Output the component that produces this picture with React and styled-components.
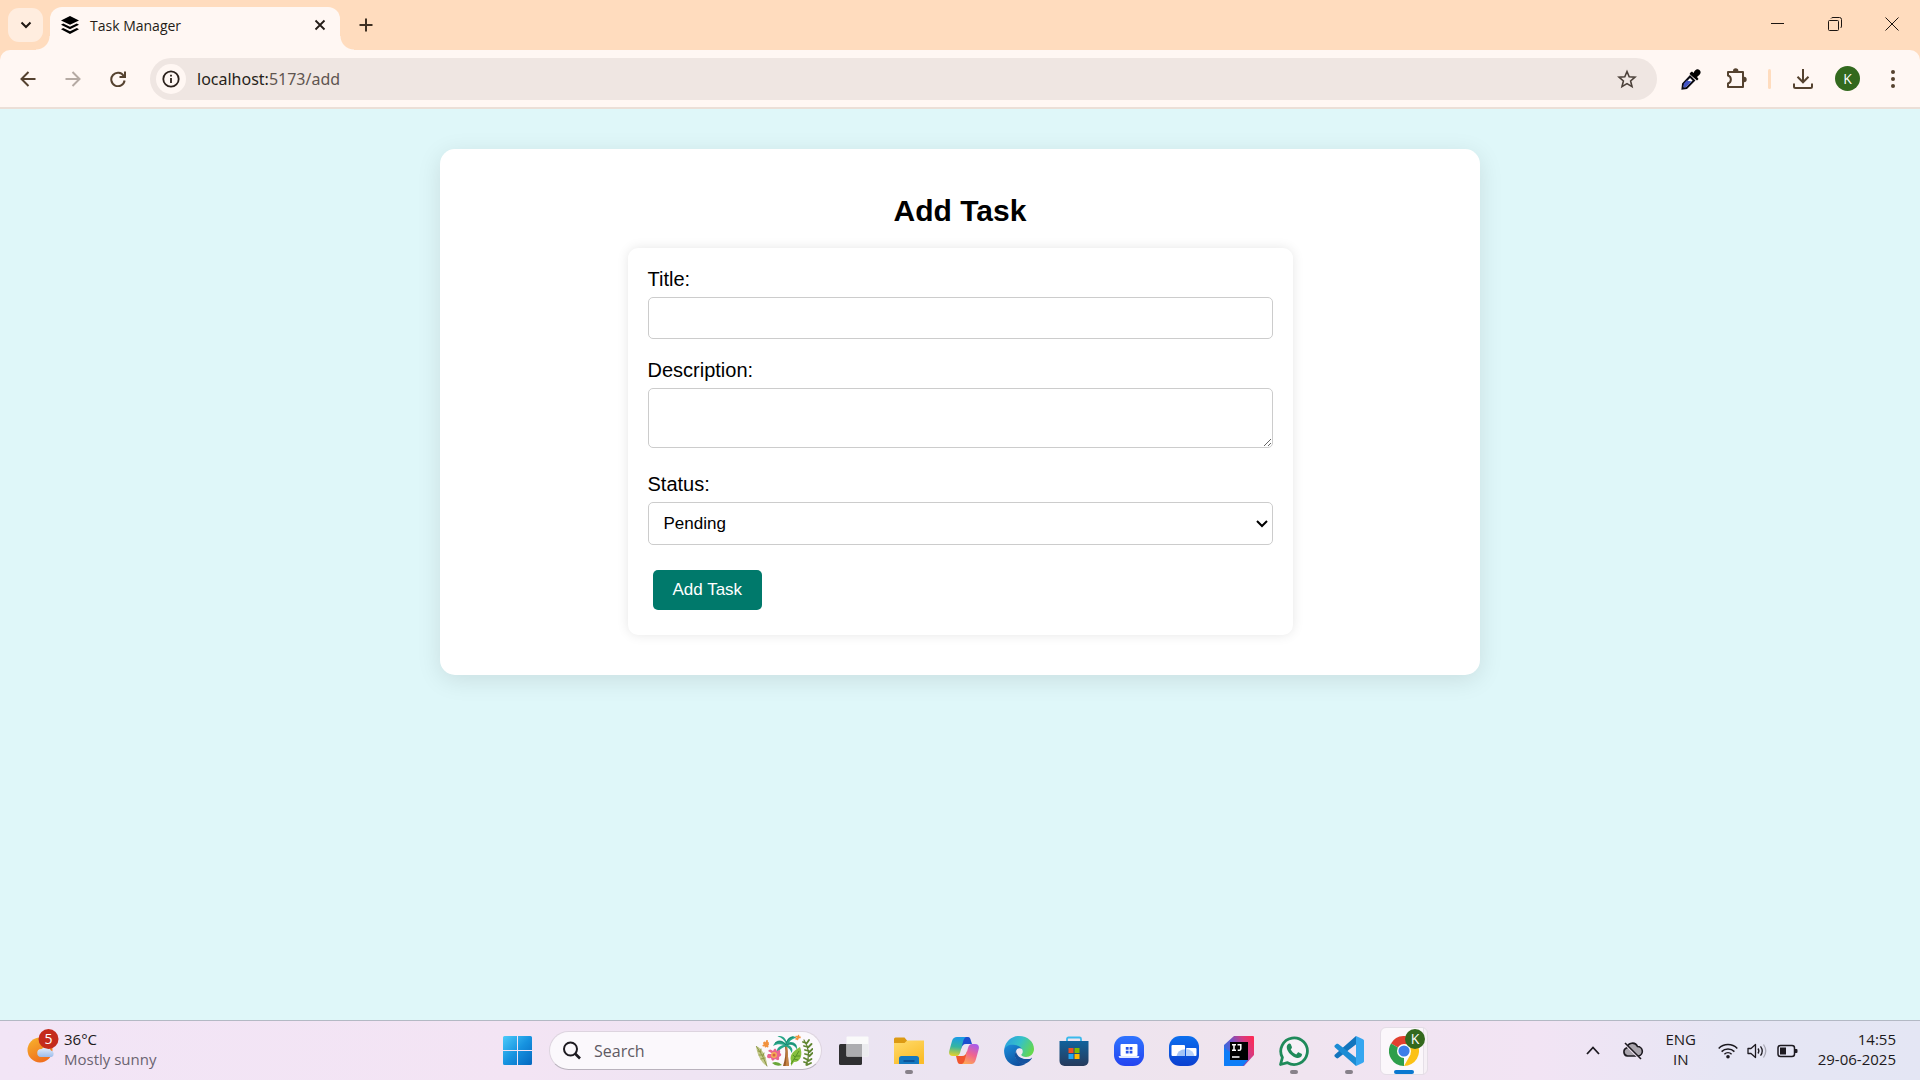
import React from "react";
import styled, { createGlobalStyle } from "styled-components";

const GlobalStyle = createGlobalStyle`
  *, *::before, *::after { box-sizing: border-box; }
  body { margin: 0; font-family: "Open Sans", "Noto Sans", sans-serif; }
  button { font: inherit; color: inherit; border: 0; background: none; padding: 0; cursor: pointer; }
  svg { display: block; }
`;

const Screen = styled.div`
  display: flex;
  flex-direction: column;
  min-height: 100vh;
  background: #ffdcbe;
`;

/* ---------- Browser tab strip ---------- */

const TabStrip = styled.header`
  display: flex;
  align-items: flex-end;
  height: 50px;
  padding-left: 8px;
  color: #3f3023;
`;

const TabSearchButton = styled.button`
  display: grid;
  place-items: center;
  width: 35px;
  height: 34px;
  margin: 0 7px 8px 0;
  border-radius: 11px;
  background: #ffeddf;
  color: #1f1712;
`;

const Tab = styled.div`
  position: relative;
  display: flex;
  align-items: center;
  gap: 11px;
  width: 290px;
  height: 43px;
  padding: 0 9px 7px 11px;
  border-radius: 12px 12px 0 0;
  background: #fff7f3;
  color: #241c17;
  font-size: 14px;
  line-height: 20px;

  &::before,
  &::after {
    content: "";
    position: absolute;
    bottom: 0;
    width: 14px;
    height: 14px;
  }
  &::before {
    right: 100%;
    background: radial-gradient(circle at 0 0, transparent 13px, #fff7f3 14px);
  }
  &::after {
    left: 100%;
    background: radial-gradient(circle at 100% 0, transparent 13px, #fff7f3 14px);
  }
`;

const TabTitle = styled.span`
  flex: 1;
  padding-top: 2px;
`;

const SmallButton = styled.button`
  display: grid;
  place-items: center;
  width: 22px;
  height: 22px;
`;

const NewTabButton = styled.button`
  display: grid;
  place-items: center;
  width: 34px;
  height: 34px;
  margin: 0 0 8px 9px;
`;

const WindowControls = styled.div`
  display: flex;
  align-self: flex-start;
  margin-left: auto;
`;

const WindowButton = styled.button`
  display: grid;
  place-items: center;
  width: 57px;
  height: 48px;
  color: #1c1511;
`;

/* ---------- Browser toolbar ---------- */

const Toolbar = styled.nav`
  display: flex;
  align-items: center;
  height: 59px;
  padding: 0 5px;
  border-radius: 10px 10px 0 0;
  border-bottom: 2px solid #ebdfd7;
  background: #fff7f3;
  color: #55422f;
`;

const ToolButton = styled.button`
  display: grid;
  place-items: center;
  width: 45px;
  height: 42px;
  color: ${(p) => (p.$muted ? "#b5aaa3" : "inherit")};
`;

const Omnibox = styled.div`
  display: flex;
  align-items: center;
  flex: 1;
  height: 42px;
  margin: 0 11px 0 10px;
  padding: 0 8px 0 6px;
  border-radius: 21px;
  background: #efe6e2;
`;

const SiteInfo = styled.button`
  display: grid;
  place-items: center;
  width: 30px;
  height: 30px;
  border-radius: 50%;
  background: #fff7f3;
  color: #2b211b;
`;

const Address = styled.div`
  flex: 1;
  padding-left: 11px;
  color: #5f5550;
  font-family: "Noto Sans", "Open Sans", sans-serif;
  font-size: 16px;
  line-height: 24px;
`;

const Host = styled.span`
  color: #261e19;
`;

const StarButton = styled.button`
  display: grid;
  place-items: center;
  width: 44px;
  height: 42px;
  color: #4b4039;
`;

const ToolDivider = styled.span`
  width: 3px;
  height: 20px;
  margin: 0 9px 0 10px;
  border-radius: 2px;
  background: #ffdcbe;
`;

const ProfileAvatar = styled.span`
  display: grid;
  place-items: center;
  width: ${(p) => p.$size}px;
  height: ${(p) => p.$size}px;
  border-radius: 50%;
  background: #33691e;
  color: #fff;
  font-size: 14px;
  line-height: 16px;
`;

/* ---------- Task form page ---------- */

const Page = styled.main`
  flex: 1;
  padding: 40px 20px;
  background: #dff7f9;
  color: #000;
  font-family: "Liberation Sans", Arial, sans-serif;
`;

const Card = styled.section`
  max-width: 1040px;
  margin: 0 auto;
  padding: 45px 40px 40px;
  border-radius: 15px;
  background: #fff;
  box-shadow: 0 5px 25px rgba(0, 0, 0, 0.1);
`;

const Heading = styled.h2`
  margin: 0 0 20px;
  font-size: 30px;
  line-height: 34px;
  text-align: center;
`;

const Form = styled.form`
  display: flex;
  flex-direction: column;
  max-width: 665px;
  margin: 0 auto;
  padding: 20px;
  border-radius: 10px;
  background: #fff;
  box-shadow: 0 0 12px rgba(0, 0, 0, 0.1);
`;

const Field = styled.div`
  display: flex;
  flex-direction: column;
  gap: 6px;
  margin-bottom: ${(p) => (p.$loose ? 25 : 20)}px;
`;

const Label = styled.label`
  font-size: 20px;
  line-height: 23px;
`;

const controlStyles = `
  width: 100%;
  border: 1px solid #ccc;
  border-radius: 5px;
  background: #fff;
  color: #000;
  font-family: inherit;
  font-size: 17px;
`;

const TextInput = styled.input`
  ${controlStyles}
  height: 42px;
  padding: 0 12px;
`;

const TextArea = styled.textarea`
  ${controlStyles}
  height: 60px;
  padding: 12px;
`;

const SelectWrap = styled.div`
  display: grid;
  align-items: center;

  & > * { grid-area: 1 / 1; }
  & > svg {
    justify-self: end;
    margin-right: 5px;
    pointer-events: none;
  }
`;

const Select = styled.select`
  ${controlStyles}
  appearance: none;
  height: 43px;
  padding: 0 15px;
`;

const SubmitButton = styled.button`
  align-self: flex-start;
  height: 40px;
  margin: 5px;
  padding: 0 20px;
  border-radius: 5px;
  background: #00796b;
  color: #fff;
  font-size: 17px;
`;

/* ---------- Taskbar ---------- */

const Taskbar = styled.footer`
  display: grid;
  grid-template-columns: 1fr auto 1fr;
  align-items: center;
  height: 60px;
  border-top: 1px solid #b3b9c4;
  background: linear-gradient(90deg, #f2e5f6 0%, #f3e4f4 27%, #ebe4f2 45%, #efe4ee 62%, #f2e4f4 80%, #e6e6f4 90%, #e4e6f4 100%);
  color: #1d1a20;
  font-size: 15px;
  line-height: 20px;
`;

const Weather = styled.div`
  display: flex;
  align-items: center;
  gap: 5px;
  padding-left: 27px;
`;

const TwoLines = styled.div`
  padding-bottom: 4px;
  text-align: ${(p) => p.$align || "left"};
`;

const Condition = styled.div`
  color: #6a6370;
`;

const TaskbarCenter = styled.div`
  display: flex;
  align-items: center;
  gap: 4px;
  padding-left: 1px;
`;

const AppList = styled.div`
  display: flex;
`;

const AppButton = styled.button`
  position: relative;
  display: grid;
  place-items: center;
  width: 55px;
  height: 59px;

  &::after {
    content: "";
    display: ${(p) => (p.$running || p.$active ? "block" : "none")};
    position: absolute;
    bottom: 6px;
    left: 50%;
    transform: translateX(-50%);
    width: ${(p) => (p.$active ? 20 : 8)}px;
    height: 4px;
    border-radius: 2px;
    background: ${(p) => (p.$active ? "#0b78d0" : "#87818a")};
  }
`;

const ActivePlate = styled.span`
  display: grid;
  place-items: center;
  width: 48px;
  height: 48px;
  border: 1px solid #e4dde6;
  border-radius: 6px;
  background: linear-gradient(90deg, #fbf7fb 0 42px, #e6e0e8 42px 43px, #f6f0f6 43px);
`;

const AppBadge = styled.span`
  position: absolute;
  top: 8px;
  right: 6px;
`;

const SearchBox = styled.label`
  display: flex;
  align-items: center;
  gap: 13px;
  width: 273px;
  height: 39px;
  padding: 0 8px 0 13px;
  border: 1px solid #ddd4df;
  border-bottom-color: #b9b2bd;
  border-radius: 20px;
  background: #fbf8fc;
  color: #1d1a20;
`;

const SearchInput = styled.input`
  flex: 1;
  min-width: 0;
  padding: 0;
  border: 0;
  outline: 0;
  background: none;
  font-family: inherit;
  font-size: 16px;
  line-height: 24px;

  &::placeholder { color: #5f5a63; opacity: 1; }
`;

const Tray = styled.div`
  display: flex;
  align-items: center;
  justify-content: flex-end;
  padding-right: 24px;
`;

const TrayButton = styled.button`
  display: grid;
  place-items: center;
  width: 40px;
  height: 48px;
`;

const Language = styled.button`
  width: 56px;
`;

const StatusGroup = styled.button`
  display: flex;
  align-items: center;
  gap: 9px;
  margin-right: 20px;
  margin-left: 9px;
`;

/* ---------- Icons ---------- */

const Stroke = ({ w, h = w, sw = 2, children, ...rest }) => (
  <svg width={w} height={h} viewBox={`0 0 ${w} ${h}`} fill="none" stroke="currentColor" strokeWidth={sw} aria-hidden="true" {...rest}>
    {children}
  </svg>
);

const LayersIcon = () => (
  <svg width="18" height="18" viewBox="0 0 18 18" aria-hidden="true">
    <path d="M9 0 18 4.400 9 8.800 0 4.400Z" />
    <path d="M2.200 7.400 0 8.800 9 13.200 18 8.800 15.800 7.400 9 10.800Z" />
    <path d="M2.200 11.900 0 13.300 9 18 18 13.300 15.800 11.900 9 15.300Z" />
  </svg>
);

const EyedropperIcon = () => (
  <svg width="20" height="22" viewBox="0 0 20 22" aria-hidden="true">
    <path d="M9 8.500 13 12.500 5.500 20 1.500 20.500 2 16Z" fill="#fff" stroke="#0a0a12" strokeWidth="2" />
    <path d="M5.500 12.500 10.500 13.500 5 19 2.300 19.500 3 15.500Z" fill="#4153c4" />
    <path d="M9.500 4.500 11 3.500 12.500 5 C14 2 15.500 .8 17.500 1.500 C20 2.500 20.300 5 18.500 6.800 L16 9 17.500 11 16 12.500 8.500 6Z" fill="#000" />
  </svg>
);

const PuzzleIcon = () => (
  <Stroke w={22}>
    <path d="M3 4H18V19H3V15.500C6.800 14.500 6.800 8.500 3 7.500Z" strokeLinejoin="round" />
    <path d="M8 3a2.700 2.700 0 0 1 5.400 0ZM19 8.800a2.700 2.700 0 0 1 0 5.400Z" fill="currentColor" stroke="none" />
  </Stroke>
);

const WeatherIcon = () => (
  <svg width="32" height="44" viewBox="0 0 32 44" aria-hidden="true">
    <defs>
      <linearGradient id="sun" x1="0" y1="0" x2="0.500" y2="1">
        <stop offset="0" stopColor="#f7b52c" />
        <stop offset="1" stopColor="#f0701f" />
      </linearGradient>
      <linearGradient id="cloud" x1="0" y1="0" x2="0" y2="1">
        <stop offset="0" stopColor="#e6f0fc" />
        <stop offset="1" stopColor="#9dbdeb" />
      </linearGradient>
    </defs>
    <circle cx="13" cy="21" r="12.500" fill="url(#sun)" />
    <path d="M14 28a4 4 0 0 1 .5-8 6 6 0 0 1 9.500 1.500A3.400 3.400 0 0 1 24.500 28Z" fill="url(#cloud)" />
    <circle cx="21.500" cy="10" r="10" fill="#c42b1c" />
    <text x="21.500" y="15" textAnchor="middle" fontSize="14" fill="#fff">5</text>
  </svg>
);

const WindowsIcon = () => (
  <svg width="29" height="29" viewBox="0 0 29 29" aria-hidden="true">
    <defs>
      <linearGradient id="win" x1="0" y1="0" x2="1" y2="1">
        <stop offset="0" stopColor="#4ccbfa" />
        <stop offset="0.500" stopColor="#1793e0" />
        <stop offset="1" stopColor="#0467bf" />
      </linearGradient>
    </defs>
    <path fill="url(#win)" d="M1.500 0H14V14H0V1.500A1.500 1.500 0 0 1 1.500 0ZM15 0H27.500A1.500 1.500 0 0 1 29 1.500V14H15ZM0 15H14V29H1.500A1.500 1.500 0 0 1 0 27.500ZM15 15H29V27.500A1.500 1.500 0 0 1 27.500 29H15Z" />
  </svg>
);

const PalmArt = () => (
  <svg width="58" height="33" viewBox="0 0 58 33" aria-hidden="true">
    <path d="M1 12C7 14 12 23 12 32 6 29 2 20 1 12Z" fill="#c3c88a" />
    <g fill="none" strokeLinecap="round">
      <path d="M1.500 12.500Q8 21 12 32" stroke="#8a9648" strokeWidth="1" />
      <path d="M3 17l3 1M4 21l4 0M6 25l4-1M6 15l-.5 3M9 19l-1 3" stroke="#8f9a45" strokeWidth="1" />
      <path d="M49 6Q57 18 51 31" stroke="#5a7d2c" strokeWidth="1.200" />
      <path d="M51 9l-3-1M53 13l-4-1M54 17l-4-1M54 21l-4-1M53 26l-4-2M52 29l-3-1M52 9l2-3M53.500 13l3-3M54.500 18l3-3M54.500 22l3-3M53.500 27l3-2M52 31l4-2" stroke="#5f8530" strokeWidth="1.800" />
    </g>
    <path d="M30 12C31 19 30 26 28 32H34C33 26 33 19 32 12Z" fill="#9a5a28" />
    <path d="M30.500 32C31.500 26 31.500 18 31 13L32 12C33 19 33 26 34 32Z" fill="#c48445" />
    <path d="M31 10C27 5 21 5 18 12 22 9.500 26 10 29 11 24 11.500 21 15 22 19 25 15 28 13 31 12.500 34 14 36 16 36.500 19 39 15 36 12 33 11 37 10 40 12 42 15.500 43 10 38 7 34 8.500 36 5.500 39 4 41.500 4 38 .5 33 3 31.500 7.500 30 3.500 27 1 22.500 2.500 27 3.500 29.500 6 31 10Z" fill="#27a688" />
    <path d="M31 11C28 7 24 7 20 9M32 11C35 9 38 9 41 12M31 11C31 7 34 4 38 3" fill="none" stroke="#147e68" strokeWidth=".8" />
    <g stroke="#f1913d" strokeWidth="2" strokeLinecap="round">
      <path d="M9 9l4 1.500M12 7l-1.500 5.500M8.500 11.500l4.500-2.500M12.500 12.500l-3-4" />
      <path d="M41 2.500l4 1M43.500 1.500l-1 4M41 5l4-2" strokeWidth="1.500" />
    </g>
    <path d="M18 20 13 17Q15 14 18 17 20 12 22 17 26 14 25 19 28 21 24 23 25 28 20 25 17 29 16 24 10 25 13 20Z" fill="#e96590" />
    <circle cx="19" cy="21" r="3" fill="#f4ae55" />
    <circle cx="19" cy="21" r="1.500" fill="#d85f49" />
    <path d="M36 27C34 20 40 16 45 13 48 20 46 28 39 28L36 32Z" fill="#86bf3e" />
    <path d="M36 30 44 17M40 23l-2-2M41 22l4 0M39 25l4 1" fill="none" stroke="#4f8b22" strokeWidth=".9" />
    <path d="M17 29q5-3 10 2-6 2-10-2Z" fill="#6aa63a" />
  </svg>
);

const TaskViewIcon = () => (
  <svg width="30" height="30" viewBox="0 0 30 30" aria-hidden="true">
    <rect x="0" y="8" width="23" height="21" rx="1.500" fill="#2f2f31" />
    <rect x="7.500" y="0.500" width="22" height="20" rx="1" fill="#fafafa" />
    <rect x="7.500" y="8" width="15.500" height="12.500" fill="#adadb0" />
    <path d="M23 8h6.500v12.500H23Z" fill="#ececef" />
  </svg>
);

const FolderIcon = () => (
  <svg width="30" height="30" viewBox="0 0 30 30" aria-hidden="true">
    <defs>
      <linearGradient id="folder" x1="0" y1="0" x2="0.600" y2="1">
        <stop offset="0" stopColor="#ffdb6b" />
        <stop offset="1" stopColor="#fbbd2a" />
      </linearGradient>
    </defs>
    <path d="M0 3A1.500 1.500 0 0 1 1.500 1.500H10.500L13 4.500V10H0Z" fill="#dc9a13" />
    <path d="M0 7H10.500L13 4.500H30V28H0Z" fill="url(#folder)" />
    <path d="M5 28V22.500A2.500 2.500 0 0 1 7.500 20H22.500A2.500 2.500 0 0 1 25 22.500V28Z" fill="#1478c0" />
    <rect x="9.500" y="24" width="11" height="2" fill="#0b549a" />
  </svg>
);

const CopilotIcon = () => (
  <svg width="30" height="30" viewBox="0 0 30 30" aria-hidden="true">
    <defs>
      <linearGradient id="copA" x1="0.300" y1="0" x2="0.200" y2="1">
        <stop offset="0" stopColor="#1a9be6" />
        <stop offset="0.500" stopColor="#35b5a0" />
        <stop offset="1" stopColor="#ecd326" />
      </linearGradient>
      <linearGradient id="copB" x1="0.700" y1="0" x2="0.300" y2="1">
        <stop offset="0" stopColor="#a95bea" />
        <stop offset="0.500" stopColor="#f0648f" />
        <stop offset="1" stopColor="#fda558" />
      </linearGradient>
    </defs>
    <path d="M13 1H19C21 1 21.500 3 22 5L23 8H17C14 8 13 10 12 13Z" fill="#1c4fcf" />
    <path d="M17 28H11C9 28 8.500 26 8 24L7 20H13C16 20 17 18 18 15Z" fill="#f0562e" />
    <path d="M8 1H17C15 2 14.500 4 14 6L11 17C10 19.500 9 20 7 20H4C0 20-.5 17 .5 14L3 5C4 2 5.500 1 8 1Z" fill="url(#copA)" />
    <path d="M22 28H13C15 27 15.500 25 16 23L19 12C20 9 21 8 23 8H26C30 8 30.500 11 29.500 14L27 23C26 27 24.500 28 22 28Z" fill="url(#copB)" />
  </svg>
);

const EdgeIcon = () => (
  <svg width="30" height="30" viewBox="0 0 30 30" aria-hidden="true">
    <defs>
      <linearGradient id="edgeTop" x1="0" y1="0.200" x2="1" y2="0.600">
        <stop offset="0" stopColor="#2b9fe0" />
        <stop offset="0.500" stopColor="#35c1c8" />
        <stop offset="1" stopColor="#66d84b" />
      </linearGradient>
      <linearGradient id="edgeMid" x1="0" y1="0" x2="0.600" y2="1">
        <stop offset="0" stopColor="#1b8fdc" />
        <stop offset="1" stopColor="#0f4f9e" />
      </linearGradient>
    </defs>
    <path d="M.3 13C1.500 5 8 0 15 0 24 0 30 6 30 13 30 18 26 21 22 21 18.500 21 16.500 19.500 17.500 18 19 16 18 11 12 10 7 9.500 2 11 .3 13Z" fill="url(#edgeTop)" />
    <path d="M.1 14C1 10 6 8 11 9 15.500 9.500 18 12 18 14 15 11 11 14 11 19 11 24 16 28 22 27.500 17 31 10 31 5 26.500 1 23 0 18 .1 14Z" fill="url(#edgeMid)" />
    <path d="M12.500 14.500C9 19 11 27 20 28 24 27 27 24.500 28 22 27.500 21 26 23 21 23 15.500 22.500 12 19 12.500 14.500Z" fill="#15539f" />
    <circle cx="15.500" cy="15.500" r="3.200" fill="#efe6f2" />
    <path d="M15 18.500C18 22 24 22 28 20L27 22.500C22 24 16 22.500 13.500 18Z" fill="#efe6f2" />
  </svg>
);

const StoreIcon = () => (
  <svg width="30" height="30" viewBox="0 0 30 30" aria-hidden="true">
    <defs>
      <linearGradient id="store" x1="0" y1="0" x2="0" y2="1">
        <stop offset="0" stopColor="#11629c" />
        <stop offset="1" stopColor="#263a5c" />
      </linearGradient>
    </defs>
    <path d="M8 6V3a1.500 1.500 0 0 1 1.500-1.500h11A1.500 1.500 0 0 1 22 3V6" fill="none" stroke="#3bb9ec" strokeWidth="1.800" />
    <path d="M.5 5H29.500V25A5 5 0 0 1 24.500 30H5.500A5 5 0 0 1 .5 25Z" fill="url(#store)" />
    <path d="M9.500 12h5v5h-5Z" fill="#f25022" />
    <path d="M15.500 12h5v5h-5Z" fill="#7fba00" />
    <path d="M9.500 18h5v5h-5Z" fill="#22a6f0" />
    <path d="M15.500 18h5v5h-5Z" fill="#ffb901" />
  </svg>
);

const LaptopIcon = () => (
  <svg width="30" height="30" viewBox="0 0 30 30" aria-hidden="true">
    <defs>
      <linearGradient id="laptop" x1="0" y1="0" x2="0" y2="1">
        <stop offset="0" stopColor="#2f74ff" />
        <stop offset="1" stopColor="#2443f0" />
      </linearGradient>
    </defs>
    <rect width="30" height="30" rx="11" fill="url(#laptop)" />
    <rect x="6.500" y="8" width="17" height="12" rx="1" fill="#fff" />
    <path d="M4.500 20H25.500L24.500 22H5.500Z" fill="#dfe8ff" />
    <path d="M11.800 11h2.800v2.800h-2.800ZM15.600 11h2.800v2.800h-2.800ZM11.800 14.800h2.800v2.800h-2.800ZM15.600 14.800h2.800v2.800h-2.800Z" fill="#2553e8" />
  </svg>
);

const DualScreenIcon = () => (
  <svg width="30" height="30" viewBox="0 0 30 30" aria-hidden="true">
    <defs>
      <linearGradient id="dual" x1="0" y1="0" x2="0" y2="1">
        <stop offset="0" stopColor="#0b6fee" />
        <stop offset="1" stopColor="#0b3fd0" />
      </linearGradient>
    </defs>
    <rect width="30" height="30" rx="11" fill="url(#dual)" />
    <rect x="2.500" y="9" width="13.500" height="11" rx="1" fill="#fff" />
    <rect x="17" y="12" width="10.500" height="8" rx="1" fill="#fff" />
    <path d="M7.500 20A9 7.500 0 0 1 16 13.200V20Z" fill="#a3c3f6" />
    <path d="M17 13A9 7.500 0 0 1 25.500 20H17Z" fill="#b9d2fa" />
  </svg>
);

const IntelliJIcon = () => (
  <svg width="30" height="30" viewBox="0 0 30 30" aria-hidden="true">
    <defs>
      <linearGradient id="ij" x1="0" y1="0.700" x2="1" y2="0.200">
        <stop offset="0" stopColor="#1a78ee" />
        <stop offset="0.400" stopColor="#6a55c8" />
        <stop offset="0.750" stopColor="#d63a80" />
        <stop offset="1" stopColor="#fb2c58" />
      </linearGradient>
    </defs>
    <path d="M10 0H29A1 1 0 0 1 30 1V19L20 30H1A1 1 0 0 1 0 29V9Z" fill="url(#ij)" />
    <path d="M0 12 6 16V24H24L18.500 30H1A1 1 0 0 1 0 29Z" fill="#0d7df7" />
    <rect x="6" y="6" width="18" height="18" fill="#000" />
    <path d="M8 8.700h4M10 8.700v5.500M8 14.200h4M13.500 8.700h3.300v4q0 1.600-1.600 1.600h-1.500M8 21h7.500" fill="none" stroke="#fff" strokeWidth="1.500" />
  </svg>
);

const WhatsAppIcon = () => (
  <svg width="30" height="30" viewBox="0 0 30 30" aria-hidden="true">
    <path d="M1.500 28.500 3.400 21.500A13.300 13.300 0 1 1 8.500 26.700Z" fill="#f6f1f7" stroke="#1f8a5a" strokeWidth="2.800" strokeLinejoin="round" />
    <path d="M10 7.500C10.800 7.300 11.400 7.400 11.800 8.200L12.900 10.900C13.100 11.600 12.700 12.200 11.700 13.300 12.800 15.800 14.800 17.500 17.200 18.400L18.700 16.700C19.100 16.300 19.400 16.300 19.900 16.500L22.500 17.800C23 18.100 23.100 18.400 22.900 19.300 22.300 21.300 20 22.400 18 22 13.500 21 8.500 16.500 7.800 12 7.500 10 8.400 8 10 7.500Z" fill="#1f8a5a" />
  </svg>
);

const VSCodeIcon = () => (
  <svg width="30" height="30" viewBox="0 0 30 30" aria-hidden="true">
    <path d="M22 0 1 18.500C.2 19.300.2 20 .9 20.700L2.300 22C3 22.500 3.700 22.500 4.300 22L22.500 8Z" fill="#1275bd" />
    <path d="M22 30 1 11.500C.2 10.700.2 10 .9 9.300L2.300 8C3 7.500 3.700 7.500 4.300 8L22.500 22Z" fill="#1b8cd4" />
    <path d="M22 0 28.500 3C29.500 3.500 30 4 30 5V25C30 26 29.500 26.500 28.500 27L22 30Z" fill="#35a6f0" />
  </svg>
);

const ChromeIcon = () => (
  <svg width="30" height="30" viewBox="0 0 30 30" aria-hidden="true">
    <path d="M15 15 2 7.500A15 15 0 0 1 28 7.500Z" fill="#e2402f" />
    <path d="M15 15V22L15 30A15 15 0 0 1 2 7.500Z" fill="#2e9e4b" />
    <path d="M15 8H28.300A15 15 0 0 1 15 30L21.500 18.500Z" fill="#fbc116" />
    <circle cx="15" cy="15" r="7" fill="#fff" />
    <circle cx="15" cy="15" r="5.600" fill="#3c7de8" />
  </svg>
);

const CloudOffIcon = () => (
  <svg width="22" height="18" viewBox="0 0 22 18" aria-hidden="true">
    <path d="M5.500 14A4.200 4.200 0 0 1 5 5.800 5.500 5.500 0 0 1 15.500 4.500 4.800 4.800 0 0 1 16.500 14Z" fill="#aaa5ad" stroke="#1d1a20" strokeWidth="1.600" />
    <path d="M2 1 18 17" stroke="#f2e4f4" strokeWidth="2" />
    <path d="M3 1 19 17" stroke="#1d1a20" strokeWidth="1.600" />
  </svg>
);

const WifiIcon = () => (
  <Stroke w={20} h={16} sw={1.5}>
    <path d="M.7 5.500a13 13 0 0 1 18.600 0M3.600 8.600a9 9 0 0 1 12.800 0M6.400 11.300a5.200 5.200 0 0 1 7.200 0" />
    <circle cx="10" cy="13.800" r="1.800" fill="currentColor" stroke="none" />
  </Stroke>
);

const VolumeIcon = () => (
  <Stroke w={21} h={16} sw={1.3}>
    <path d="M1 5.500H4L8.500 1.500V14.500L4 10.500H1Z" strokeLinejoin="round" />
    <path d="M11 5.500q1.800 2.500 0 5M13.500 3.300q3.500 4.700 0 9.400" />
    <path d="M16.500 1.500q4.500 6.500 0 13" opacity="0.300" />
  </Stroke>
);

const BatteryIcon = () => (
  <Stroke w={21} h={14} sw={1.5}>
    <rect x="1" y="1.500" width="16.500" height="11" rx="2.500" />
    <path d="M3 3.500H9V10.500H3ZM18 5h1.500a1 1 0 0 1 1 1V8a1 1 0 0 1-1 1H18Z" fill="currentColor" stroke="none" />
  </Stroke>
);

const APPS = [
  { name: "Task View", Icon: TaskViewIcon },
  { name: "File Explorer", Icon: FolderIcon, running: true },
  { name: "Copilot", Icon: CopilotIcon },
  { name: "Microsoft Edge", Icon: EdgeIcon },
  { name: "Microsoft Store", Icon: StoreIcon },
  { name: "My Device", Icon: LaptopIcon },
  { name: "Screen Share", Icon: DualScreenIcon },
  { name: "IntelliJ IDEA", Icon: IntelliJIcon },
  { name: "WhatsApp", Icon: WhatsAppIcon, running: true },
  { name: "Visual Studio Code", Icon: VSCodeIcon, running: true },
];

/* ---------- Sections ---------- */

function BrowserChrome() {
  return (
    <>
      <TabStrip>
        <TabSearchButton aria-label="Search tabs">
          <Stroke w={12} h={8}><path d="M1.500 1.500 6 6 10.500 1.500" /></Stroke>
        </TabSearchButton>
        <Tab>
          <LayersIcon />
          <TabTitle>Task Manager</TabTitle>
          <SmallButton aria-label="Close tab">
            <Stroke w={12} sw={1.8}><path d="M1.500 1.500 10.500 10.500M10.500 1.500 1.500 10.500" /></Stroke>
          </SmallButton>
        </Tab>
        <NewTabButton aria-label="New tab">
          <Stroke w={14}><path d="M7 0.500V13.500M.5 7H13.500" /></Stroke>
        </NewTabButton>
        <WindowControls>
          <WindowButton aria-label="Minimize">
            <Stroke w={13} h={2} sw={1}><path d="M0 .5H13" /></Stroke>
          </WindowButton>
          <WindowButton aria-label="Restore">
            <Stroke w={14} sw={1}>
              <rect x="0.500" y="3.500" width="10" height="10" rx="1" />
              <path d="M3 1.500Q3.500.5 5 .5H11.500Q13.500.5 13.500 2.500V9Q13.500 10.500 12.500 11" />
            </Stroke>
          </WindowButton>
          <WindowButton aria-label="Close">
            <Stroke w={14} sw={1}><path d="M.5.5 13.500 13.500M13.500.5.5 13.500" /></Stroke>
          </WindowButton>
        </WindowControls>
      </TabStrip>
      <Toolbar>
        <ToolButton aria-label="Back">
          <Stroke w={16}><path d="M8.500 1 1.500 8 8.500 15M1.500 8H15.500" /></Stroke>
        </ToolButton>
        <ToolButton aria-label="Forward" $muted>
          <Stroke w={16}><path d="M7.500 1 14.500 8 7.500 15M14.500 8H.5" /></Stroke>
        </ToolButton>
        <ToolButton aria-label="Reload">
          <Stroke w={16}>
            <path d="M13.700 5A6.700 6.700 0 1 0 14.600 9.500" />
            <path d="M15 .5V6H9.500" />
          </Stroke>
        </ToolButton>
        <Omnibox>
          <SiteInfo aria-label="View site information">
            <Stroke w={18} sw={1.8}>
              <circle cx="9" cy="9" r="7.700" />
              <path d="M9 8V13M9 4.800V6.600" />
            </Stroke>
          </SiteInfo>
          <Address><Host>localhost:</Host>5173/add</Address>
          <StarButton aria-label="Bookmark this tab">
            <Stroke w={20} sw={1.6}>
              <path d="M10 2.500 12.200 7.700 18 8.200 13.600 12 15 17.600 10 14.600 5 17.600 6.400 12 2 8.200 7.800 7.700Z" />
            </Stroke>
          </StarButton>
        </Omnibox>
        <ToolButton aria-label="Color picker"><EyedropperIcon /></ToolButton>
        <ToolButton aria-label="Extensions"><PuzzleIcon /></ToolButton>
        <ToolDivider />
        <ToolButton aria-label="Downloads">
          <Stroke w={20}>
            <path d="M10 0V13M4.500 7.800 10 13.300 15.500 7.800M1 14.500V17.500Q1 19 2.500 19H17.500Q19 19 19 17.500V14.500" />
          </Stroke>
        </ToolButton>
        <ToolButton aria-label="Profile"><ProfileAvatar $size={25}>K</ProfileAvatar></ToolButton>
        <ToolButton aria-label="Menu">
          <svg width="4" height="18" viewBox="0 0 4 18" fill="currentColor" aria-hidden="true">
            <circle cx="2" cy="2" r="2" /><circle cx="2" cy="9" r="2" /><circle cx="2" cy="16" r="2" />
          </svg>
        </ToolButton>
      </Toolbar>
    </>
  );
}

function AddTaskPage() {
  return (
    <Page>
      <Card>
        <Heading>Add Task</Heading>
        <Form onSubmit={(e) => e.preventDefault()}>
          <Field>
            <Label htmlFor="title">Title:</Label>
            <TextInput id="title" type="text" />
          </Field>
          <Field $loose>
            <Label htmlFor="description">Description:</Label>
            <TextArea id="description" />
          </Field>
          <Field>
            <Label htmlFor="status">Status:</Label>
            <SelectWrap>
              <Select id="status" defaultValue="Pending">
                <option>Pending</option>
                <option>In Progress</option>
                <option>Completed</option>
              </Select>
              <Stroke w={12} h={8}><path d="M1 1 6 6 11 1" /></Stroke>
            </SelectWrap>
          </Field>
          <SubmitButton type="submit">Add Task</SubmitButton>
        </Form>
      </Card>
    </Page>
  );
}

function WindowsTaskbar() {
  return (
    <Taskbar>
      <Weather>
        <WeatherIcon />
        <TwoLines>
          <div>36°C</div>
          <Condition>Mostly sunny</Condition>
        </TwoLines>
      </Weather>
      <TaskbarCenter>
        <AppButton aria-label="Start"><WindowsIcon /></AppButton>
        <SearchBox>
          <Stroke w={18} h={19} sw={2}>
            <circle cx="7.500" cy="8" r="6.500" />
            <path d="M12 12.500 17 17.500" strokeWidth="2.600" />
          </Stroke>
          <SearchInput type="text" placeholder="Search" aria-label="Search" />
          <PalmArt />
        </SearchBox>
        <AppList>
          {APPS.map(({ name, Icon, running }) => (
            <AppButton key={name} aria-label={name} $running={running}><Icon /></AppButton>
          ))}
          <AppButton aria-label="Google Chrome" $active>
            <ActivePlate><ChromeIcon /></ActivePlate>
            <AppBadge><ProfileAvatar $size={20}>K</ProfileAvatar></AppBadge>
          </AppButton>
        </AppList>
      </TaskbarCenter>
      <Tray>
        <TrayButton aria-label="Show hidden icons">
          <Stroke w={14} h={9} sw={1.8}><path d="M1 8 7 1.500 13 8" /></Stroke>
        </TrayButton>
        <TrayButton aria-label="OneDrive"><CloudOffIcon /></TrayButton>
        <Language aria-label="Input language">
          <TwoLines $align="center">ENG<br />IN</TwoLines>
        </Language>
        <StatusGroup aria-label="Network, volume and battery">
          <WifiIcon />
          <VolumeIcon />
          <BatteryIcon />
        </StatusGroup>
        <TwoLines $align="right">
          <div>14:55</div>
          <div>29-06-2025</div>
        </TwoLines>
      </Tray>
    </Taskbar>
  );
}

export default function App() {
  return (
    <Screen>
      <GlobalStyle />
      <BrowserChrome />
      <AddTaskPage />
      <WindowsTaskbar />
    </Screen>
  );
}
